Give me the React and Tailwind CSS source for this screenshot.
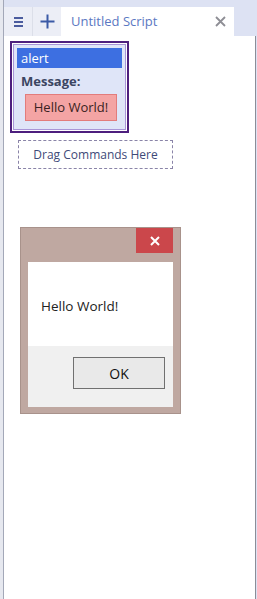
import React from "react";

export default function App() {
  const font = { fontFamily: '"Open Sans", "Noto Sans", sans-serif' };
  return (
    <div className="w-[257px] h-[599px] flex bg-[#dde2f3] overflow-hidden" style={font}>
      <div className="w-[3px] bg-[#e6e8ef]" />
      <div className="w-px bg-[#a3a8b8]" />
      <div className="flex-1 flex flex-col">
        <div className="h-[7px]" />
        <div className="h-[29px] flex">
          <div className="w-[29px] bg-[#eceef6] flex items-center justify-center border-r border-[#dcdfe9]">
            <div className="flex flex-col gap-[2px] mt-[1px]">
              <div className="w-[9px] h-[2px] bg-[#4b5c9e]" />
              <div className="w-[9px] h-[2px] bg-[#4b5c9e]" />
              <div className="w-[9px] h-[2px] bg-[#4b5c9e]" />
            </div>
          </div>
          <div className="w-[28px] bg-[#eceef6] flex items-center justify-center">
            <svg width="15" height="15" viewBox="0 0 15 15">
              <path d="M7.5 0.5V14.5M0.5 7.5H14.5" stroke="#3b5aa6" strokeWidth="2" />
            </svg>
          </div>
          <div className="w-[173px] bg-white flex items-center pl-[10px] pr-[6px]">
            <span className="text-[13px] text-[#5b78c2] flex-1 leading-none">Untitled Script</span>
            <svg width="11" height="11" viewBox="0 0 11 11" className="mr-[2px]">
              <path d="M1 1L10 10M10 1L1 10" stroke="#8e8e95" strokeWidth="1.8" />
            </svg>
          </div>
          <div className="flex-1" />
        </div>
        <div className="flex-1 flex">
          <div className="w-[251px] bg-white flex flex-col items-start">
            <div className="ml-[6px] mt-[5px] w-[119px] border-2 border-[#4d1f7e] p-px">
              <div className="border border-[#a995d8] bg-[#dfe5f8] px-[3px] pt-[3px] pb-[8px]">
                <div className="h-[20px] bg-[#3d6fe1] text-white text-[13px] leading-[20px] pl-[4px]">alert</div>
                <div className="text-[13px] font-bold text-[#3b4562] pl-[4px] mt-[4px] leading-[18px]">Message:</div>
                <div className="ml-[8px] mt-[4px] w-[92px] h-[27px] bg-[#f4a4a4] border border-[#e27c7c] flex items-center justify-center text-[13px] text-[#3a2222]">
                  Hello World!
                </div>
              </div>
            </div>
            <div className="ml-[14px] mt-[7px] w-[155px] h-[29px] border border-dashed border-[#8a84a8] flex items-center justify-center text-[12px] text-[#3e4a78]">
              Drag Commands Here
            </div>
            <div className="ml-[16px] mt-[58px] w-[161px] h-[187px] bg-[#bfa8a1] border border-[#a8928b] flex flex-col px-[7px]">
              <div className="h-[34px] flex justify-end">
                <div className="w-[37px] h-[25px] bg-[#cb474b] flex items-center justify-center">
                  <svg width="10" height="10" viewBox="0 0 10 10">
                    <path d="M1 1L9 9M9 1L1 9" stroke="white" strokeWidth="2" />
                  </svg>
                </div>
              </div>
              <div className="h-[84px] bg-white flex items-center pl-[13px] pt-[5px] text-[13.5px] text-[#222]">Hello World!</div>
              <div className="h-[61px] bg-[#f0f0f0] flex justify-end items-start pt-[11px] pr-[8px]">
                <div className="w-[92px] h-[32px] border border-[#707070] bg-[#e9e9e9] flex items-center justify-center text-[14px] text-[#111]">
                  OK
                </div>
              </div>
            </div>
          </div>
          <div className="w-px bg-[#8a8d98]" />
        </div>
      </div>
    </div>
  );
}
